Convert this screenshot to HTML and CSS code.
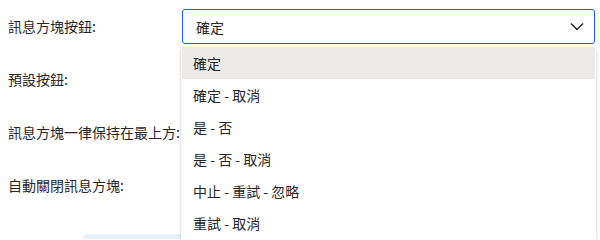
FILE: index.html
```html
<!DOCTYPE html>
<html lang="zh-Hant">
<head>
<meta charset="utf-8">
<link rel="stylesheet" href="styles.css">
</head>
<body>
<div class="page">
  <div class="form">
    <div class="row">
      <div class="label">訊息方塊按鈕:</div>
      <div class="field">
        <div class="select">
          <span class="value">確定</span>
          <svg class="chev" width="14" height="9" viewBox="0 0 14 9"><path d="M1 1.5 L7 7.5 L13 1.5" fill="none" stroke="#222" stroke-width="1.4"/></svg>
        </div>
        <ul class="menu">
          <li class="item active">確定</li>
          <li class="item">確定 - 取消</li>
          <li class="item">是 - 否</li>
          <li class="item">是 - 否 - 取消</li>
          <li class="item">中止 - 重試 - 忽略</li>
          <li class="item">重試 - 取消</li>
        </ul>
      </div>
    </div>
    <div class="row"><div class="label">預設按鈕:</div></div>
    <div class="row"><div class="label">訊息方塊一律保持在最上方:</div></div>
    <div class="row"><div class="label">自動關閉訊息方塊:</div></div>
    <div class="actions"><div class="pill"></div></div>
  </div>
</div>
</body>
</html>
```
FILE: styles.css
```css
* { box-sizing: border-box; }
html, body { margin: 0; padding: 0; background: #fff; }
body {
  font-family: "Noto Sans CJK TC", "Liberation Sans", sans-serif;
  font-size: 14px;
  color: #262626;
  width: 600px;
  height: 240px;
  overflow: hidden;
}
.page { padding: 9px 0 0 8px; }
.form { display: flex; flex-direction: column; }
.row {
  display: flex;
  align-items: flex-start;
  height: 53px;
}
.label {
  width: 174px;
  line-height: 20px;
  padding-top: 7px;
  flex: none;
}
.field { position: relative; width: 413px; }
.select {
  height: 35px;
  border: 1.5px solid #1a5fe0;
  border-radius: 3px;
  display: flex;
  align-items: center;
  justify-content: space-between;
  padding: 0 10px 0 13px;
  background: #fff;
}
.value { line-height: 20px; }
.chev { display: block; }
.menu {
  position: absolute;
  left: -1px;
  top: 38px;
  width: 415px;
  margin: 0;
  padding: 0 0 2px 0;
  list-style: none;
  background: #fff;
  box-shadow: 0 1px 3px rgba(0,0,0,0.25);
  border-radius: 2px;
  z-index: 5;
}
.item {
  height: 32px;
  line-height: 32px;
  padding-left: 11px;
  margin: 0 1px;
}
.item.active { background: #ebeae8; }
.actions { display: flex; padding-left: 75px; margin-top: 13px; }
.pill {
  width: 110px;
  height: 5px;
  background: #e8f0fd;
  border-radius: 8px 8px 0 0;
}
```
